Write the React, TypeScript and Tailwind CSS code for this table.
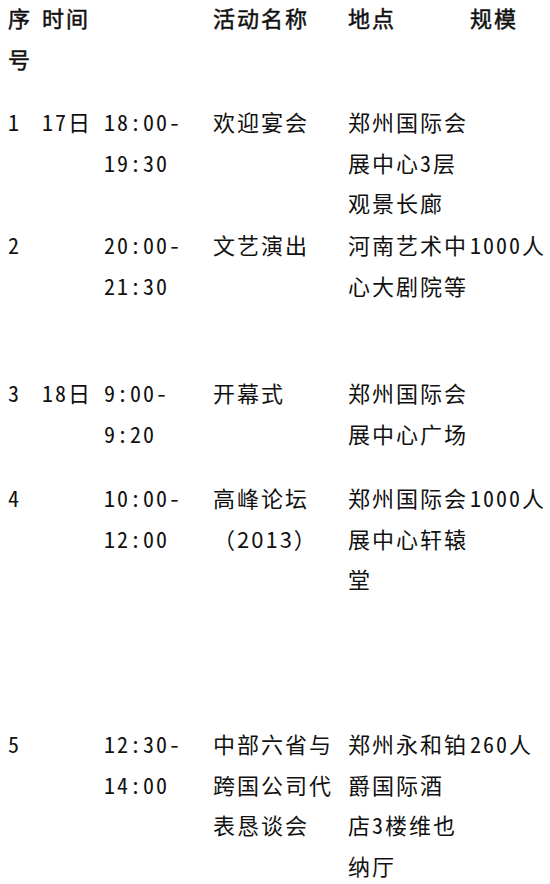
import React from 'react'

type Row = {
    no: string,
    date: string,
    time: string[],
    name: string[],
    place: string[],
    size: string,
    height: string,
}

const rows: Row[] = [
    {
        no: "1", date: "17日", time: ["18:00-", "19:30"], name: ["欢迎宴会"],
        place: ["郑州国际会", "展中心3层", "观景长廊"], size: "", height: "h-[123px]"
    },
    {
        no: "2", date: "", time: ["20:00-", "21:30"], name: ["文艺演出"],
        place: ["河南艺术中", "心大剧院等"], size: "1000人", height: "h-[148px]"
    },
    {
        no: "3", date: "18日", time: ["9:00-", "9:20"], name: ["开幕式"],
        place: ["郑州国际会", "展中心广场"], size: "", height: "h-[105px]"
    },
    {
        no: "4", date: "", time: ["10:00-", "12:00"], name: ["高峰论坛", "（2013）"],
        place: ["郑州国际会", "展中心轩辕", "堂"], size: "1000人", height: "h-[246px]"
    },
    {
        no: "5", date: "", time: ["12:30-", "14:00"], name: ["中部六省与", "跨国公司代", "表恳谈会"],
        place: ["郑州永和铂", "爵国际酒", "店3楼维也", "纳厅"], size: "260人", height: "h-[170px]"
    },
]

const Lines = ({ items, className = "" }: { items: string[], className?: string }) => (
    <div className={className}>
        {items.map((t, i) => <div key={i} className="whitespace-nowrap">{t}</div>)}
    </div>
)

const App = () => {
    return (
        <div className="w-[550px] h-[884px] overflow-hidden bg-white text-[#111] text-[22px] leading-[40.5px] tracking-[2px] [font-feature-settings:'hwid'] [font-family:'Noto_Sans_CJK_SC',sans-serif] -mt-[3px]">
            <div className="grid grid-cols-[34px_62px_109px_135px_122px_1fr] pl-2 h-[104px] [-webkit-text-stroke:0.5px_#111]">
                <Lines items={["序", "号"]} />
                <div className="col-span-2">时间</div>
                <div>活动名称</div>
                <div>地点</div>
                <div>规模</div>
            </div>
            {rows.map(r => (
                <div key={r.no} className={"grid grid-cols-[34px_62px_109px_135px_122px_1fr] pl-2 " + r.height}>
                    <div>{r.no}</div>
                    <div>{r.date}</div>
                    <Lines items={r.time} />
                    <Lines items={r.name} className="[font-feature-settings:normal]" />
                    <Lines items={r.place} />
                    <div className="whitespace-nowrap">{r.size}</div>
                </div>
            ))}
        </div>
    )
}

export default App
